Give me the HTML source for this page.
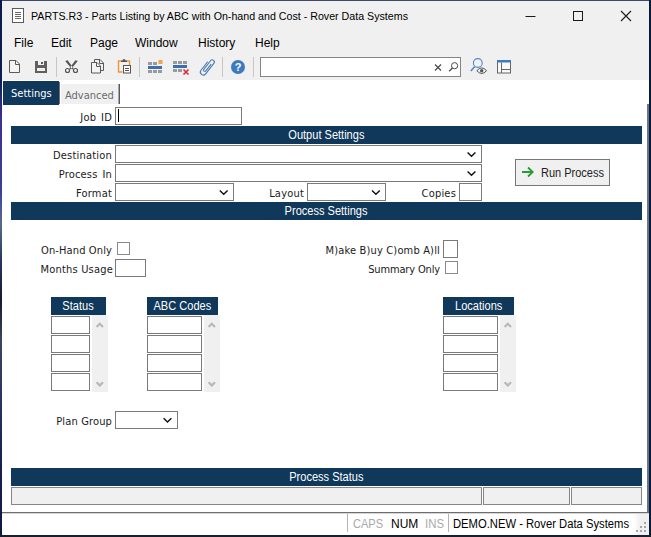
<!DOCTYPE html>
<html>
<head>
<meta charset="utf-8">
<title>PARTS.R3</title>
<style>
html,body{margin:0;padding:0;}
body{width:651px;height:537px;overflow:hidden;background:#fff;position:relative;font-family:"Liberation Sans",sans-serif;}
.abs,.abs *{position:absolute;box-sizing:border-box;}
#win{left:0;top:0;width:651px;height:537px;overflow:hidden;background:#fff;}
.t{white-space:pre;transform-origin:0 0;line-height:1;}
.seg{font-family:"Liberation Sans",sans-serif;font-size:12px;color:#000;}
.lbl{font-family:"DejaVu Sans Condensed","DejaVu Sans","Liberation Sans",sans-serif;font-size:11px;color:#1a1a1a;text-align:right;white-space:pre;line-height:13px;height:13px;letter-spacing:0.2px;word-spacing:1.5px;}
.hdr{background:#0f385a;color:#fff;font-family:"Liberation Sans",sans-serif;font-size:12px;text-align:center;white-space:pre;}
.hdr span{position:static;display:inline-block;transform:scaleX(0.92);transform-origin:50% 50%;}
.inp{background:#fff;border:1px solid #7a7a7a;}
.chk{background:#fff;border:1px solid #8a8a8a;}
.sb{background:#f0f0f0;}
.stat{background:#f0f0f0;border:1px solid #868686;}
</style>
</head>
<body>
<div id="win" class="abs">
  <!-- chrome background -->
  <div style="left:0;top:0;width:651px;height:80px;background:#f0f0f0;"></div>
  <!-- title bar -->
  <svg style="left:11px;top:7px;width:15px;height:17px;" viewBox="0 0 15 17">
    <rect x="1.5" y="1.5" width="11" height="14" fill="#fff" stroke="#5a5a5a" stroke-width="1"/>
    <path d="M4 5.5h6M4 7.5h6M4 9.5h6M4 11.5h6" stroke="#6a6a6a" stroke-width="1"/>
  </svg>
  <div class="t seg" id="title" style="left:31px;top:11px;font-size:11px;transform:scaleX(0.969);">PARTS.R3 - Parts Listing by ABC with On-hand and Cost - Rover Data Systems</div>
  <svg style="left:520px;top:5px;width:125px;height:22px;" viewBox="0 0 125 22">
    <path d="M5.5 11.5h10" stroke="#1a1a1a" stroke-width="1" fill="none"/>
    <rect x="53.5" y="6.5" width="9" height="9" stroke="#1a1a1a" stroke-width="1" fill="none"/>
    <path d="M101 6l10 10M111 6l-10 10" stroke="#1a1a1a" stroke-width="1.1" fill="none"/>
  </svg>
  <!-- menu -->
  <div class="t seg" style="left:14px;top:37px;">File</div>
  <div class="t seg" style="left:51px;top:37px;">Edit</div>
  <div class="t seg" style="left:90px;top:37px;">Page</div>
  <div class="t seg" style="left:135px;top:37px;">Window</div>
  <div class="t seg" style="left:198px;top:37px;">History</div>
  <div class="t seg" style="left:255px;top:37px;">Help</div>
  <!-- toolbar -->
  <svg id="toolbar" style="left:0;top:55px;width:651px;height:25px;" viewBox="0 55 651 25">
    <!-- new -->
    <path d="M9.5 60.5h6.5l3.5 3.5v8.5h-10z" fill="#f4f4f4" stroke="#5a5a5a" stroke-width="1"/>
    <path d="M15.5 60.5v4h4" fill="none" stroke="#5a5a5a" stroke-width="1"/>
    <!-- save -->
    <path d="M35 61h12v12h-12z" fill="#606060"/>
    <rect x="38" y="61" width="6" height="4" fill="#f0f0f0"/>
    <rect x="41" y="62" width="2" height="2" fill="#5c5c5c"/>
    <rect x="37" y="68" width="8" height="3" fill="#f0f0f0"/>
    <!-- sep -->
    <rect x="56" y="57" width="1" height="20" fill="#c6c6c6"/>
    <!-- scissors -->
    <path d="M65.200 60.900L67.600 60.200L73.700 68.600L72.300 69.600zM77.800 60.900L75.400 60.200L69.300 68.600L70.700 69.600z" fill="#555"/>
    <circle cx="67.5" cy="70.5" r="2" fill="none" stroke="#555" stroke-width="1.2"/>
    <circle cx="75.5" cy="70.5" r="2" fill="none" stroke="#555" stroke-width="1.2"/>
    <!-- copy -->
    <path d="M94.5 59.5h5.5l3.500 3.5v7.500h-9z" fill="#f0f0f0" stroke="#5a5a5a" stroke-width="1"/>
    <path d="M99.500 59.500v4h4" fill="none" stroke="#5a5a5a" stroke-width="1"/>
    <path d="M91.500 62.500h5.500l3.500 3.500v7h-9z" fill="#f4f4f4" stroke="#5a5a5a" stroke-width="1"/>
    <path d="M96.500 62.500v4h4" fill="none" stroke="#5a5a5a" stroke-width="1"/>
    <!-- paste -->
    <path d="M121 61h-2.500v11h4" fill="none" stroke="#f0943a" stroke-width="1.400"/>
    <path d="M126 61h3.500v4" fill="none" stroke="#f0943a" stroke-width="1.400"/>
    <path d="M121 62v-1.500h1.500a1.500 1.500 0 0 1 3 0h1.500v1.500z" fill="#555"/>
    <rect x="123.500" y="65.500" width="7" height="7.500" fill="#fafafa" stroke="#555" stroke-width="1"/>
    <path d="M125 68.500h4M125 70.500h4" stroke="#555" stroke-width="1"/>
    <!-- sep -->
    <rect x="139" y="57" width="1" height="20" fill="#c6c6c6"/>
    <!-- insert row -->
    <g fill="#9a9a9a">
      <rect x="148" y="62" width="4" height="3"/><rect x="153" y="62" width="4" height="3"/>
      <rect x="148" y="70" width="4" height="3"/><rect x="153" y="70" width="4" height="3"/><rect x="158" y="70" width="4" height="3"/>
    </g>
    <rect x="148" y="66" width="14" height="3" fill="#3a6fb0"/>
    <rect x="158.500" y="60" width="4" height="4" fill="#f2a24a"/>
    <!-- delete row -->
    <g fill="#9a9a9a">
      <rect x="173" y="61" width="4" height="3"/><rect x="178" y="61" width="4" height="3"/><rect x="183" y="61" width="4" height="3"/>
      <rect x="173" y="69" width="4" height="3"/><rect x="178" y="69" width="4" height="3"/>
    </g>
    <rect x="173" y="65" width="14" height="3" fill="#3a6fb0"/>
    <path d="M183.500 69.500l5 5M188.500 69.500l-5 5" stroke="#d8283c" stroke-width="1.600" fill="none"/>
    <!-- paperclip -->
    <path transform="translate(207.200 67.100) rotate(38) scale(0.92)" d="M-3.200-4.500L-3.200 6.800A3.200 3.200 0 0 0 3.200 6.800L3.200-7.700A2.300 2.300 0 0 0-1.400-7.700L-1.400 4.200A1.400 1.400 0 0 0 1.400 4.200L1.400-4.800" fill="none" stroke="#4a7ab5" stroke-width="1.200" stroke-linecap="round"/>
    <!-- sep -->
    <rect x="222" y="57" width="1" height="20" fill="#c6c6c6"/>
    <!-- help -->
    <circle cx="238" cy="67" r="7" fill="#3d7abf"/>
    <text x="238" y="71" text-anchor="middle" font-family="Liberation Sans, sans-serif" font-weight="bold" font-size="11" fill="#fff">?</text>
    <!-- sep -->
    <rect x="253" y="57" width="1" height="20" fill="#c6c6c6"/>
    <!-- search box -->
    <rect x="260.500" y="57.500" width="200" height="19" fill="#fff" stroke="#848484" stroke-width="1"/>
    <path d="M435 64.500l6 6M441 64.500l-6 6" stroke="#444" stroke-width="1.100" fill="none"/>
    <circle cx="454.600" cy="65.700" r="3.100" fill="none" stroke="#4a4a4a" stroke-width="1"/>
    <path d="M452.400 68l-3.200 3.200" stroke="#4a4a4a" stroke-width="1.300" fill="none"/>
    <!-- find-eye -->
    <circle cx="477.800" cy="63" r="4.400" fill="none" stroke="#5488c8" stroke-width="1.100"/>
    <path d="M474.800 66.500l-4 4.500" stroke="#5488c8" stroke-width="1.600" fill="none"/>
    <path d="M476.800 70.700q4.900-5.600 9.800 0q-4.900 5.600-9.800 0z" fill="#f0f0f0" stroke="#555" stroke-width="1"/>
    <circle cx="481.700" cy="70.700" r="1.700" fill="#555"/>
    <!-- layout -->
    <rect x="497.500" y="60.500" width="13" height="12.500" fill="#f8f8f8" stroke="#666" stroke-width="1"/>
    <rect x="497" y="60" width="14" height="2.500" fill="#3d7abf"/>
    <path d="M501.500 62.500v10.500M501.500 69.500h9" stroke="#666" stroke-width="1" fill="none"/>
  </svg>

  <!-- tabs -->
  <div style="left:3px;top:81px;width:56px;height:24px;background:#0f385a;"></div>
  <div style="left:59px;top:82px;width:1px;height:22px;background:#6e6e6e;"></div>
  <div class="t" style="left:11px;top:88px;font-size:11px;color:#fff;font-family:'DejaVu Sans Condensed','DejaVu Sans',sans-serif;">Settings</div>
  <div style="left:61px;top:84px;width:59px;height:20px;background:#f0f0f0;border-right:1px solid #585858;"></div>
  <div style="left:118px;top:84px;width:1px;height:20px;background:#a8a8a8;"></div>
  <div class="t" style="left:65px;top:90px;font-size:11px;color:#6a6a6a;font-family:'DejaVu Sans Condensed','DejaVu Sans',sans-serif;">Advanced</div>

  <!-- Job ID -->
  <div class="lbl" style="left:12px;top:111px;width:100px;">Job ID</div>
  <div class="inp" style="left:115px;top:107px;width:127px;height:18px;"></div>
  <div style="left:118px;top:109px;width:1px;height:13px;background:#000;"></div>

  <div class="hdr" style="left:11px;top:126px;width:631px;height:18px;line-height:18px;"><span>Output Settings</span></div>

  <div class="lbl" style="left:12px;top:149px;width:100px;">Destination</div>
  <div class="inp" style="left:115px;top:145px;width:367px;height:18px;"></div>
  <div class="lbl" style="left:12px;top:168px;width:100px;">Process In</div>
  <div class="inp" style="left:115px;top:164px;width:367px;height:18px;"></div>
  <div class="lbl" style="left:12px;top:187px;width:100px;">Format</div>
  <div class="inp" style="left:115px;top:183px;width:119px;height:18px;"></div>
  <div class="lbl" style="left:204px;top:187px;width:100px;">Layout</div>
  <div class="inp" style="left:307px;top:183px;width:79px;height:18px;"></div>
  <div class="lbl" style="left:356px;top:187px;width:100px;">Copies</div>
  <div class="inp" style="left:459px;top:183px;width:23px;height:18px;"></div>

  <div class="hdr" style="left:11px;top:202px;width:631px;height:18px;line-height:18px;"><span>Process Settings</span></div>

  <!-- run process -->
  <div style="left:515px;top:159px;width:95px;height:27px;background:#f0f0f0;border:1px solid #767676;"></div>
  <svg style="left:520px;top:165px;width:16px;height:14px;" viewBox="520 165 16 14"><path d="M522 172h10M528 167.500l4.700 4.500l-4.700 4.500" fill="none" stroke="#2c9a34" stroke-width="1.800" stroke-linejoin="miter"/></svg>
  <div class="t" style="left:541px;top:167px;font-size:12px;color:#222;transform:scaleX(0.917);">Run Process</div>

  <!-- process settings fields -->
  <div class="lbl" style="left:12px;top:244px;width:100px;letter-spacing:0.12px;word-spacing:0;">On-Hand Only</div>
  <div class="chk" style="left:117px;top:242px;width:13px;height:13px;"></div>
  <div class="lbl" style="left:13px;top:263px;width:100px;word-spacing:0;">Months Usage</div>
  <div class="inp" style="left:115px;top:259px;width:31px;height:18px;"></div>
  <div class="lbl" style="left:290px;top:244px;width:150px;letter-spacing:0.17px;word-spacing:0;">M)ake B)uy C)omb A)ll</div>
  <div class="inp" style="left:443px;top:240px;width:15px;height:18px;"></div>
  <div class="lbl" style="left:290px;top:263px;width:150px;letter-spacing:-0.15px;word-spacing:0;">Summary Only</div>
  <div class="chk" style="left:445px;top:261px;width:13px;height:13px;"></div>

  <!-- grids -->
  <div class="hdr" style="left:51px;top:297px;width:55px;height:18px;line-height:18px;"><span>Status</span></div>
  <div class="sb" style="left:92px;top:315px;width:16px;height:77px;"></div>
  <div class="inp" style="left:51px;top:316px;width:39px;height:18px;"></div>
  <div class="inp" style="left:51px;top:335px;width:39px;height:18px;"></div>
  <div class="inp" style="left:51px;top:354px;width:39px;height:18px;"></div>
  <div class="inp" style="left:51px;top:373px;width:39px;height:18px;"></div>

  <div class="hdr" style="left:147px;top:297px;width:71px;height:18px;line-height:18px;"><span>ABC Codes</span></div>
  <div class="sb" style="left:204px;top:315px;width:16px;height:77px;"></div>
  <div class="inp" style="left:147px;top:316px;width:55px;height:18px;"></div>
  <div class="inp" style="left:147px;top:335px;width:55px;height:18px;"></div>
  <div class="inp" style="left:147px;top:354px;width:55px;height:18px;"></div>
  <div class="inp" style="left:147px;top:373px;width:55px;height:18px;"></div>

  <div class="hdr" style="left:443px;top:297px;width:71px;height:18px;line-height:18px;"><span>Locations</span></div>
  <div class="sb" style="left:500px;top:315px;width:16px;height:77px;"></div>
  <div class="inp" style="left:443px;top:316px;width:55px;height:18px;"></div>
  <div class="inp" style="left:443px;top:335px;width:55px;height:18px;"></div>
  <div class="inp" style="left:443px;top:354px;width:55px;height:18px;"></div>
  <div class="inp" style="left:443px;top:373px;width:55px;height:18px;"></div>

  <div class="lbl" style="left:12px;top:415px;width:100px;letter-spacing:0.15px;word-spacing:0;">Plan Group</div>
  <div class="inp" style="left:115px;top:411px;width:63px;height:18px;"></div>

  <!-- chevrons and scroll arrows -->
  <svg style="left:0;top:140px;width:651px;height:300px;" viewBox="0 140 651 300">
    <g fill="none" stroke="#111" stroke-width="1.400">
      <path d="M467.600 152.400l3.900 3.900l3.900-3.900"/>
      <path d="M467.600 171.400l3.900 3.900l3.900-3.900"/>
      <path d="M219.800 190.400l3.900 3.900l3.900-3.900"/>
      <path d="M372 190.400l3.900 3.900l3.900-3.900"/>
      <path d="M163.600 418.200l3.900 3.900l3.900-3.900"/>
    </g>
    <g fill="none" stroke="#b8b8b8" stroke-width="2.200">
      <path d="M96.600 327l3.200-3.200l3.200 3.200"/><path d="M96.600 382.200l3.200 3.200l3.200-3.200"/>
      <path d="M208.600 327l3.200-3.200l3.200 3.200"/><path d="M208.600 382.200l3.200 3.200l3.200-3.200"/>
      <path d="M504.600 327l3.200-3.200l3.200 3.200"/><path d="M504.600 382.200l3.200 3.200l3.200-3.200"/>
    </g>
  </svg>

  <!-- process status -->
  <div class="hdr" style="left:11px;top:468px;width:631px;height:18px;line-height:18px;"><span>Process Status</span></div>
  <div class="stat" style="left:11px;top:487px;width:471px;height:18px;"></div>
  <div class="stat" style="left:483px;top:487px;width:87px;height:18px;"></div>
  <div class="stat" style="left:571px;top:487px;width:71px;height:18px;"></div>

  <!-- status bar -->
  <div style="left:2px;top:512px;width:647px;height:1px;background:#6e6e6e;"></div>
  <div style="left:2px;top:513px;width:647px;height:1px;background:#d6d6d6;"></div>
  <div style="left:634px;top:514px;width:15px;height:21px;background:linear-gradient(90deg,#fff,#f0f0f0 40%);"></div>
  <svg style="left:634px;top:519px;width:14px;height:15px;" viewBox="634 519 14 15"><g fill="#a6a6a6"><rect x="644" y="522" width="2" height="2"/><rect x="640" y="526" width="2" height="2"/><rect x="644" y="526" width="2" height="2"/><rect x="636" y="530" width="2" height="2"/><rect x="640" y="530" width="2" height="2"/><rect x="644" y="530" width="2" height="2"/></g></svg>
  <div style="left:347px;top:514px;width:1px;height:18px;background:#b4b4b4;"></div>
  <div style="left:448px;top:514px;width:1px;height:18px;background:#b4b4b4;"></div>
  <div class="t seg" style="left:353px;top:518px;color:#a9a9a9;transform:scaleX(0.92);">CAPS</div>
  <div class="t seg" style="left:391px;top:518px;">NUM</div>
  <div class="t seg" style="left:425px;top:518px;color:#a9a9a9;transform:scaleX(0.95);">INS</div>
  <div class="t seg" style="left:453px;top:518px;transform:scaleX(0.936);">DEMO.NEW - Rover Data Systems</div>

  <!-- window borders -->
  <div style="left:0;top:0;width:651px;height:1px;background:#3c4a66;"></div>
  <div style="left:0;top:0;width:2px;height:537px;background:linear-gradient(180deg,#0c1a4a 0px,#0e1d52 80px,#2a2a7a 100px,#3b3291 120px,#3a3f95 190px,#4a5a9c 210px,#5a6a84 225px,#2a3560 260px,#141a30 300px,#3a4560 340px,#2a3460 400px,#1a2050 460px,#0e1a40 537px);"></div>
  <div style="left:647px;top:104px;width:2px;height:408px;background:#6b7588;"></div>
  <div style="left:649px;top:0;width:2px;height:537px;background:#0a1a3c;"></div>
  <div style="left:0;top:535px;width:651px;height:2px;background:#1a1f2e;"></div>
</div>
</body>
</html>
